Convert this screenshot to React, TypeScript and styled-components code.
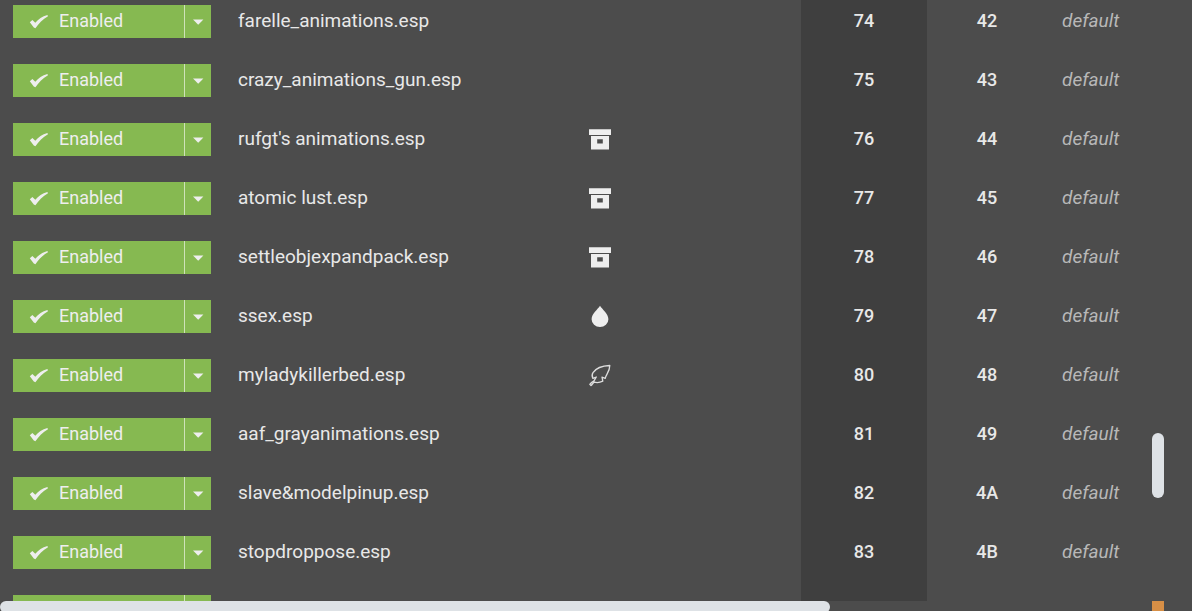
import React from 'react';
import styled, { createGlobalStyle } from 'styled-components';

const GlobalStyle = createGlobalStyle`
  * { box-sizing: border-box; }
  body {
    margin: 0;
    background: #4c4c4c;
    color: #e8e8e8;
    font-family: Roboto, "Liberation Sans", sans-serif;
    font-size: 18px;
    font-weight: 500;
    overflow: hidden;
  }
`;

type IconKind = 'archive' | 'drop' | 'feather';

interface Plugin {
  name: string;
  icon?: IconKind;
  order: number;
  index: string;
}

const plugins: Plugin[] = [
  { name: 'farelle_animations.esp', order: 74, index: '42' },
  { name: 'crazy_animations_gun.esp', order: 75, index: '43' },
  { name: "rufgt's animations.esp", icon: 'archive', order: 76, index: '44' },
  { name: 'atomic lust.esp', icon: 'archive', order: 77, index: '45' },
  { name: 'settleobjexpandpack.esp', icon: 'archive', order: 78, index: '46' },
  { name: 'ssex.esp', icon: 'drop', order: 79, index: '47' },
  { name: 'myladykillerbed.esp', icon: 'feather', order: 80, index: '48' },
  { name: 'aaf_grayanimations.esp', order: 81, index: '49' },
  { name: 'slave&modelpinup.esp', order: 82, index: '4A' },
  { name: 'stopdroppose.esp', order: 83, index: '4B' },
];

const Page = styled.div`
  display: grid;
  grid-template-columns: minmax(0, 1fr) 12px 28px;
  grid-template-rows: minmax(0, 1fr) 10px;
  height: 100vh;
`;

const Viewport = styled.div`
  overflow: hidden;
`;

const Table = styled.table`
  width: 100%;
  table-layout: fixed;
  border-collapse: collapse;
`;

const Col = styled.col<{ $width?: number }>`
  width: ${(p) => (p.$width ? `${p.$width}px` : 'auto')};
`;

const Row = styled.tr`
  height: 59px;
`;

const Cell = styled.td<{ $align?: 'left' | 'center'; $inset?: number; $sorted?: boolean }>`
  padding: 5px 0 21px ${(p) => p.$inset ?? 0}px;
  vertical-align: top;
  text-align: ${(p) => p.$align ?? 'left'};
  line-height: 32px;
  white-space: nowrap;
  background: ${(p) => (p.$sorted ? '#3f3f3f' : 'transparent')};
`;

const NameCell = styled(Cell)`
  font-size: 19px;
  font-weight: 450;
`;

const Group = styled.em`
  color: #b8b8b8;
  font-size: 19px;
  font-weight: 450;
`;

const SplitButton = styled.div`
  display: flex;
  width: 198px;
  height: 33px;
`;

const baseButton = `
  border: 0;
  margin: 0;
  background: #86b951;
  color: #eeeeee;
  font: inherit;
  display: flex;
  align-items: center;
  cursor: pointer;
`;

const ToggleButton = styled.button`
  ${baseButton}
  flex: 1;
  gap: 10px;
  padding: 0 0 0 16px;
  font-weight: 400;
  line-height: 31px;
`;

const ToggleLabel = styled.span`
  align-self: flex-start;
`;

const CaretButton = styled.button`
  ${baseButton}
  width: 27px;
  padding: 1px 0 0;
  justify-content: center;
  border-left: 1px solid #cfe2b9;
`;

const Glyph = styled.svg`
  display: block;
  flex: none;
`;

const FlagGlyph = styled(Glyph)`
  margin: 5px auto 0;
`;

const VerticalTrack = styled.div`
  display: flex;
  flex-direction: column;
`;

const Spacer = styled.div<{ $grow: number }>`
  flex: ${(p) => p.$grow} 1 0;
`;

const VerticalThumb = styled.div`
  height: 65px;
  border-radius: 6px;
  background: #dee2e6;
`;

const HorizontalTrack = styled.div`
  display: flex;
  overflow: hidden;
`;

const HorizontalThumb = styled.div`
  flex: 830 1 0;
  height: 12px;
  border-radius: 6px;
  background: #dee2e6;
`;

const Corner = styled.div`
  background: #d78f46;
`;

function CheckGlyph() {
  return (
    <Glyph width="20" height="16" viewBox="0 0 20 16" aria-hidden="true">
      <path d="M0.8 8.2 3.4 6 6.3 8.8C9.4 5.2 13.2 2.4 18.4 1L19 2.2C13.6 5.2 10 9.2 6.4 14.2L4.8 13.4Z" fill="#eeeeee" />
    </Glyph>
  );
}

function CaretGlyph() {
  return (
    <Glyph width="12" height="6" viewBox="0 0 12 6" aria-hidden="true">
      <path d="M1 0.5H11.4L6.2 5.7Z" fill="#eeeeee" />
    </Glyph>
  );
}

function FlagIcon({ kind }: { kind: IconKind }) {
  return (
    <FlagGlyph width="24" height="24" viewBox="0 0 24 24" role="img" aria-label={kind}>
      {kind === 'archive' && (
        <path
          fillRule="evenodd"
          fill="#eeeeee"
          d="M1 1.2H23V7H1ZM3 8H21V21.4H3ZM9.2 11.2V15.6H14.8V11.2Z"
        />
      )}
      {kind === 'drop' && (
        <path fill="#eeeeee" d="M12 0.8C14.2 4.4 20.4 8.8 20.4 14.2A8.4 7.7 0 0 1 3.6 14.2C3.6 8.8 9.8 4.4 12 0.8Z" />
      )}
      {kind === 'feather' && (
        <path
          fill="none"
          stroke="#dddddd"
          strokeWidth="1.3"
          strokeLinejoin="round"
          strokeLinecap="round"
          d="M21.8 1.5C14.6 1.8 8 4.2 5 8.6C3.6 10.8 3.8 12.4 4.9 14.3L8.3 13L6 16.8C4.4 17.6 2.8 18.8 1.8 20.4L3 21.6C4 20.8 4.8 19 6.2 18.2C8.8 18.8 12 18.6 14.8 17.2L14 13.2L17.2 14.4C18 10.4 21.8 7.4 21.8 1.5Z"
        />
      )}
    </FlagGlyph>
  );
}

function StatusControl({ plugin }: { plugin?: string }) {
  return (
    <SplitButton>
      <ToggleButton type="button" aria-label={plugin ? undefined : 'Enabled'}>
        {plugin && (
          <>
            <CheckGlyph />
            <ToggleLabel>Enabled</ToggleLabel>
          </>
        )}
      </ToggleButton>
      <CaretButton type="button" aria-label={plugin ? `More actions for ${plugin}` : 'More actions'}>
        <CaretGlyph />
      </CaretButton>
    </SplitButton>
  );
}

export default function App() {
  return (
    <>
      <GlobalStyle />
      <Page>
        <Viewport>
          <Table aria-label="Plugins">
            <colgroup>
              <Col $width={225} />
              <Col />
              <Col $width={100} />
              <Col $width={151} />
              <Col $width={126} />
              <Col $width={120} />
              <Col $width={105} />
            </colgroup>
            <tbody>
              {plugins.map((p) => (
                <Row key={p.name}>
                  <Cell $inset={13}>
                    <StatusControl plugin={p.name} />
                  </Cell>
                  <NameCell $inset={13}>{p.name}</NameCell>
                  <Cell $align="center">{p.icon && <FlagIcon kind={p.icon} />}</Cell>
                  <Cell />
                  <Cell $align="center" $sorted>{p.order}</Cell>
                  <Cell $align="center">{p.index}</Cell>
                  <Cell $inset={15}>
                    <Group>default</Group>
                  </Cell>
                </Row>
              ))}
              <Row>
                <Cell $inset={13}>
                  <StatusControl />
                </Cell>
                <Cell />
                <Cell />
                <Cell />
                <Cell $sorted />
                <Cell />
                <Cell />
              </Row>
            </tbody>
          </Table>
        </Viewport>
        <VerticalTrack>
          <Spacer $grow={433} />
          <VerticalThumb />
          <Spacer $grow={103} />
        </VerticalTrack>
        <div />
        <HorizontalTrack>
          <HorizontalThumb />
          <Spacer $grow={322} />
        </HorizontalTrack>
        <Corner />
      </Page>
    </>
  );
}
